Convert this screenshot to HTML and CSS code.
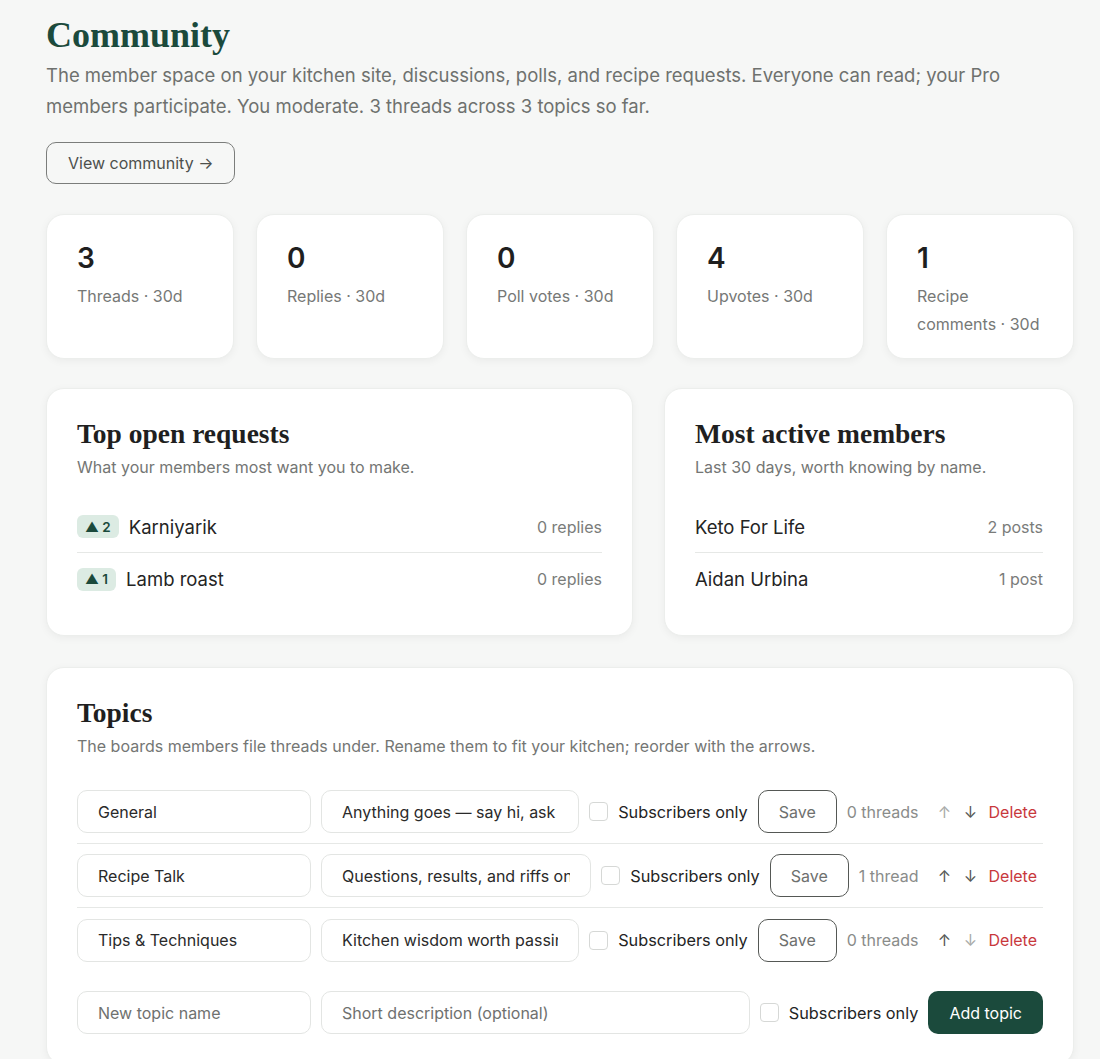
FILE: index.html
```html
<!DOCTYPE html>
<html lang="en">
<head>
<meta charset="utf-8">
<title>Community</title>
<link rel="stylesheet" href="styles.css">
</head>
<body>
<main class="page">
  <header class="intro">
    <h1 class="title">Community</h1>
    <p class="lead">The member space on your kitchen site, discussions, polls, and recipe requests. Everyone can read; your Pro members participate. You moderate. 3 threads across 3 topics so far.</p>
    <a class="btn-outline" href="#">View community →</a>
  </header>

  <section class="stats">
    <div class="stat"><div class="stat-num">3</div><div class="stat-label">Threads · 30d</div></div>
    <div class="stat"><div class="stat-num">0</div><div class="stat-label">Replies · 30d</div></div>
    <div class="stat"><div class="stat-num">0</div><div class="stat-label">Poll votes · 30d</div></div>
    <div class="stat"><div class="stat-num">4</div><div class="stat-label">Upvotes · 30d</div></div>
    <div class="stat"><div class="stat-num">1</div><div class="stat-label">Recipe comments · 30d</div></div>
  </section>

  <section class="panels">
    <div class="card">
      <h2 class="card-title">Top open requests</h2>
      <p class="card-sub">What your members most want you to make.</p>
      <ul class="list">
        <li class="list-row"><span class="req"><span class="badge">▲ 2</span><span class="name">Karniyarik</span></span><span class="meta">0 replies</span></li>
        <li class="list-row"><span class="req"><span class="badge">▲ 1</span><span class="name">Lamb roast</span></span><span class="meta">0 replies</span></li>
      </ul>
    </div>
    <div class="card">
      <h2 class="card-title">Most active members</h2>
      <p class="card-sub">Last 30 days, worth knowing by name.</p>
      <ul class="list">
        <li class="list-row"><span class="name">Keto For Life</span><span class="meta">2 posts</span></li>
        <li class="list-row"><span class="name">Aidan Urbina</span><span class="meta">1 post</span></li>
      </ul>
    </div>
  </section>

  <section class="card topics">
    <h2 class="card-title">Topics</h2>
    <p class="card-sub">The boards members file threads under. Rename them to fit your kitchen; reorder with the arrows.</p>
    <div class="topic-rows">
      <div class="topic-row">
        <input class="field field-name" type="text" value="General">
        <input class="field field-desc" type="text" value="Anything goes — say hi, ask anything">
        <label class="check"><span class="box"></span>Subscribers only</label>
        <button class="btn-save">Save</button>
        <span class="count">0 threads</span>
        <span class="arrows"><span class="arrow dim">↑</span><span class="arrow">↓</span></span>
        <a class="delete" href="#">Delete</a>
      </div>
      <div class="topic-row">
        <input class="field field-name" type="text" value="Recipe Talk">
        <input class="field field-desc" type="text" value="Questions, results, and riffs on recipes">
        <label class="check"><span class="box"></span>Subscribers only</label>
        <button class="btn-save">Save</button>
        <span class="count">1 thread</span>
        <span class="arrows"><span class="arrow">↑</span><span class="arrow">↓</span></span>
        <a class="delete" href="#">Delete</a>
      </div>
      <div class="topic-row">
        <input class="field field-name" type="text" value="Tips &amp; Techniques">
        <input class="field field-desc" type="text" value="Kitchen wisdom worth passing on">
        <label class="check"><span class="box"></span>Subscribers only</label>
        <button class="btn-save">Save</button>
        <span class="count">0 threads</span>
        <span class="arrows"><span class="arrow">↑</span><span class="arrow dim">↓</span></span>
        <a class="delete" href="#">Delete</a>
      </div>
    </div>
    <div class="topic-new">
      <input class="field field-name" type="text" placeholder="New topic name">
      <input class="field field-desc" type="text" placeholder="Short description (optional)">
      <label class="check"><span class="box"></span>Subscribers only</label>
      <button class="btn-primary">Add topic</button>
    </div>
  </section>
</main>
</body>
</html>
```

FILE: styles.css
```css
* { box-sizing: border-box; }

html, body {
  margin: 0;
  padding: 0;
  background: #f6f7f6;
}

body {
  font-family: "Inter", "Open Sans", sans-serif;
  color: #242424;
}

.page {
  padding: 13px 26px 40px 46px;
}

.title {
  font-family: "Liberation Serif", serif;
  font-weight: 700;
  font-size: 36px;
  line-height: 44px;
  color: #1b4a3c;
  margin: 0 0 3px;
}

.lead {
  font-size: 18.5px;
  line-height: 31px;
  color: #6e716e;
  margin: 0 0 20px;
  max-width: 1000px;
}

.btn-outline {
  display: inline-flex;
  align-items: center;
  height: 42px;
  padding: 0 21px;
  border: 1px solid #7b7d7b;
  border-radius: 10px;
  color: #4d504d;
  font-size: 16px;
  text-decoration: none;
}

.stats {
  display: grid;
  grid-template-columns: repeat(5, 1fr);
  gap: 22px;
  margin-top: 30px;
}

.stat {
  background: #fff;
  border: 1px solid #eceeec;
  border-radius: 18px;
  box-shadow: 0 2px 8px rgba(0,0,0,0.05);
  height: 145px;
  padding: 26px 30px 20px;
}

.stat-num {
  font-size: 28px;
  font-weight: 600;
  line-height: 34px;
  color: #1f1f1f;
}

.stat-label {
  margin-top: 7px;
  font-size: 16px;
  line-height: 28px;
  color: #767876;
}

.panels {
  display: grid;
  grid-template-columns: 587px 1fr;
  gap: 31px;
  margin-top: 29px;
}

.card {
  background: #fff;
  border: 1px solid #eceeec;
  border-radius: 18px;
  box-shadow: 0 2px 8px rgba(0,0,0,0.05);
  padding: 29px 30px 30px;
}

.card-title {
  font-family: "Liberation Serif", serif;
  font-weight: 700;
  font-size: 27.5px;
  line-height: 32px;
  color: #1f1f1f;
  margin: 0;
}

.card-sub {
  font-size: 16px;
  line-height: 24px;
  color: #747674;
  margin: 5px 0 0;
}

.list {
  list-style: none;
  margin: 22px 0 0;
  padding: 0;
}

.list-row {
  display: flex;
  align-items: center;
  justify-content: space-between;
  height: 52px;
  border-bottom: 1px solid #e6e8e6;
}

.list-row:last-child {
  border-bottom: none;
}

.req {
  display: flex;
  align-items: center;
  gap: 10px;
}

.badge {
  display: inline-flex;
  align-items: center;
  justify-content: center;
  height: 23px;
  padding: 0 8px;
  border-radius: 6px;
  background: #dcebe3;
  color: #1b4a3c;
  font-size: 13.5px;
  font-weight: 600;
}

.name {
  font-size: 18.5px;
  color: #242424;
}

.meta {
  font-size: 16px;
  color: #7a7c7a;
}

.topics {
  margin-top: 31px;
  padding-top: 29px;
  padding-bottom: 30px;
}

.topic-rows {
  margin-top: 22px;
}

.topic-row,
.topic-new {
  display: flex;
  align-items: center;
  gap: 10px;
}

.topic-row {
  height: 64px;
  border-bottom: 1px solid #e6e8e6;
}

.topic-row:last-child {
  border-bottom: none;
}

.topic-new {
  margin-top: 19px;
}

.field {
  height: 43px;
  border: 1px solid #e3e5e3;
  border-radius: 10px;
  padding: 0 20px;
  font-family: inherit;
  font-size: 16px;
  color: #2a2a2a;
  background: #fff;
  outline: none;
}

.field::placeholder {
  color: #6f716f;
}

.field-name {
  width: 234px;
  flex: none;
}

.field-desc {
  flex: 1 1 auto;
  min-width: 0;
  width: 0;
}

.check {
  display: inline-flex;
  align-items: center;
  gap: 10px;
  font-size: 16.3px;
  color: #242424;
  white-space: nowrap;
  flex: none;
}

.box {
  width: 19px;
  height: 19px;
  border: 1px solid #d6d8d6;
  border-radius: 4px;
  background: #fff;
}

.btn-save {
  flex: none;
  height: 43px;
  width: 79px;
  border: 1px solid #555855;
  border-radius: 10px;
  background: #fff;
  font-family: inherit;
  font-size: 16px;
  color: #6e706e;
}

.count {
  flex: none;
  font-size: 16px;
  color: #8a8c8a;
  white-space: nowrap;
}

.arrows {
  flex: none;
  display: inline-flex;
  gap: 10px;
  margin-left: 8px;
}

.arrow {
  font-size: 16px;
  color: #555855;
  width: 16px;
  text-align: center;
}

.arrow.dim {
  color: #a9aba9;
}

.delete {
  flex: none;
  font-size: 16px;
  color: #c8383c;
  text-decoration: none;
  padding-right: 6px;
}

.btn-primary {
  flex: none;
  height: 43px;
  padding: 0 21px;
  border: none;
  border-radius: 10px;
  background: #1b4a3c;
  color: #fff;
  font-family: inherit;
  font-size: 16px;
}
```
